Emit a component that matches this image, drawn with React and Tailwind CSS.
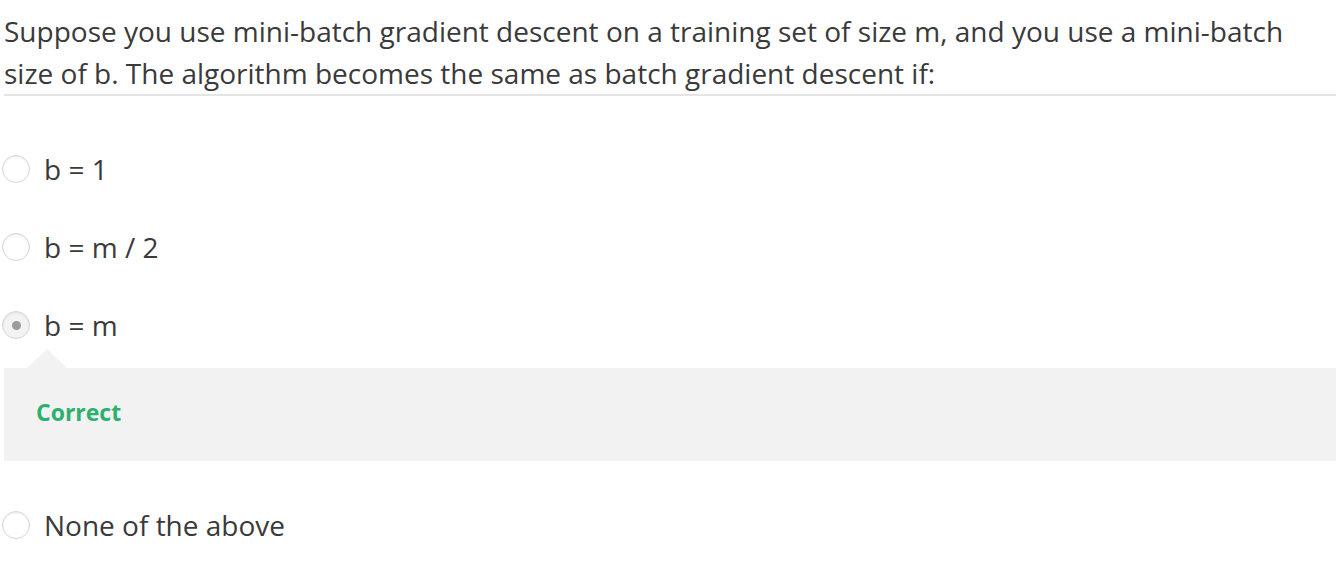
import React from "react";

function Radio({ checked }) {
  return (
    <div
      className={
        "w-[28px] h-[28px] rounded-full border border-[#d6d6d6] shadow-[inset_0_1px_2px_rgba(0,0,0,0.08)] flex items-center justify-center shrink-0 " +
        (checked ? "bg-[#f3f3f3]" : "bg-white")
      }
    >
      {checked && <div className="w-[9px] h-[9px] rounded-full bg-[#9b9b9b]" />}
    </div>
  );
}

function Option({ label, checked }) {
  return (
    <div className="flex items-center h-[42px] pl-[2px]">
      <Radio checked={checked} />
      <span className="ml-[14px] text-[28px] leading-[42px] text-[#3a3a3a]">{label}</span>
    </div>
  );
}

export default function App() {
  return (
    <div className="w-[1344px] h-[566px] bg-white overflow-hidden" style={{ fontFamily: '"Open Sans", sans-serif' }}>
      <div className="mx-[4px] w-[1332px] pt-[10px] border-b-2 border-[#e4e4e4]">
        <p className="text-[28px] leading-[42px] text-[#3a3a3a]">
          Suppose you use mini-batch gradient descent on a training set of size m, and you use a mini-batch
          <br />
          size of b. The algorithm becomes the same as batch gradient descent if:
        </p>
      </div>
      <div className="mt-[52px] flex flex-col">
        <Option label="b = 1" />
        <div className="h-[36px]" />
        <Option label="b = m / 2" />
        <div className="h-[36px]" />
        <Option label="b = m" checked />
        <div className="ml-[4px] w-[1332px] mt-[22px] relative bg-[#f2f2f2] h-[93px] pt-[28px] pl-[32px]">
          <div className="absolute left-[23px] top-[-19px] w-0 h-0 border-l-[20px] border-r-[20px] border-b-[19px] border-l-transparent border-r-transparent border-b-[#f2f2f2]" />
          <span className="text-[23px] leading-[32px] font-bold text-[#2bb06d]">Correct</span>
        </div>
        <div className="h-[43px]" />
        <Option label="None of the above" />
      </div>
    </div>
  );
}
